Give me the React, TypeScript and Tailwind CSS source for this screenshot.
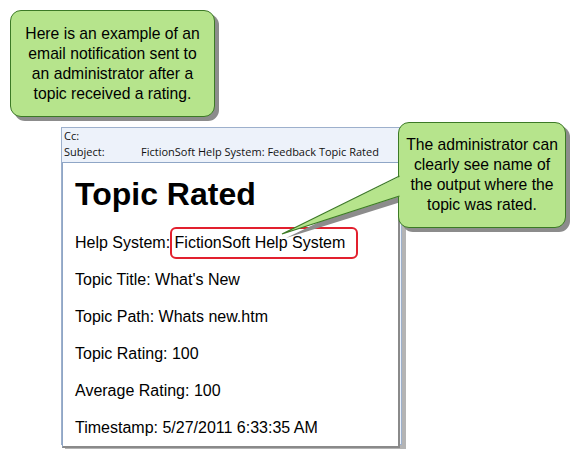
export default function App() {
  const rows = [
    "Topic Title: What's New",
    "Topic Path: Whats new.htm",
    "Topic Rating: 100",
    "Average Rating: 100",
    "Timestamp: 5/27/2011 6:33:35 AM",
  ];

  return (
    <div className="relative w-[579px] h-[450px] bg-white overflow-hidden font-['Liberation_Sans',Arial,sans-serif] text-black">
      {/* Email window */}
      <div className="absolute left-[61px] top-[127px] w-[341px] h-[318px] border border-[#9db0cc] bg-[#edf2fa] shadow-[4px_4px_0_#b4b4b4] flex flex-col">
        <div className="h-[34px] px-[2px] font-['Open_Sans',sans-serif] text-[11px] leading-[16px] text-[#111]">
          <div className="h-[16px]">Cc:</div>
          <div className="h-[18px] flex">
            <span className="w-[77px]">Subject:</span>
            <span>FictionSoft Help System: Feedback Topic Rated</span>
          </div>
        </div>
        <div className="flex-1 bg-white border-l border-t border-[#8fa6c6] border-r-2 border-r-[#8a8a8a] border-b-2 border-b-[#8a8a8a] mr-[1px] pl-[12px] pt-[13px]">
          <h1 className="text-[32px] leading-[36px] font-bold">Topic Rated</h1>
          <div className="mt-[12px] text-[16px]">
            <div className="h-[37px] leading-[37px]">
              Help System:{" "}
              <span className="relative inline-block">
                FictionSoft Help System
                <span className="absolute left-[-5px] right-[-13px] top-[3px] bottom-[2px] border-2 border-[#e2202e] rounded-[6px]" />
              </span>
            </div>
            {rows.map((r) => (
              <div key={r} className="h-[37px] leading-[37px]">
                {r}
              </div>
            ))}
          </div>
        </div>
      </div>

      {/* Callout 1 */}
      <div className="absolute left-[10px] top-[10px] w-[205px] h-[107px] rounded-[11px] bg-[#b6e48c] border-[1.5px] border-[#3c7a26] shadow-[4px_4px_0_#8c8c8c] flex items-center justify-center text-center text-[15.7px] leading-[20px]">
        <p>
          Here is an example of an
          <br />
          email notification sent to
          <br />
          an administrator after a
          <br />
          topic received a rating.
        </p>
      </div>

      {/* Callout 2 pointer shadow */}
      <svg className="absolute left-0 top-0" width="579" height="450">
        <polygon points="404,181 286,238 404,201" fill="#8c8c8c" />
      </svg>

      {/* Callout 2 */}
      <div className="absolute left-[398px] top-[122px] w-[168px] h-[106px] rounded-[11px] bg-[#b6e48c] border-[1.5px] border-[#3c7a26] shadow-[4px_4px_0_#8c8c8c] flex items-center justify-center text-center text-[15.7px] leading-[20px]">
        <p>
          The administrator can
          <br />
          clearly see name of
          <br />
          the output where the
          <br />
          topic was rated.
        </p>
      </div>

      {/* Callout 2 pointer */}
      <svg className="absolute left-0 top-0" width="579" height="450">
        <polygon points="401,176 282,234 401,196" fill="#b6e48c" />
        <polyline points="399.5,176 282,234 399.5,196" fill="none" stroke="#3c7a26" strokeWidth="1.3" />
      </svg>
    </div>
  );
}
